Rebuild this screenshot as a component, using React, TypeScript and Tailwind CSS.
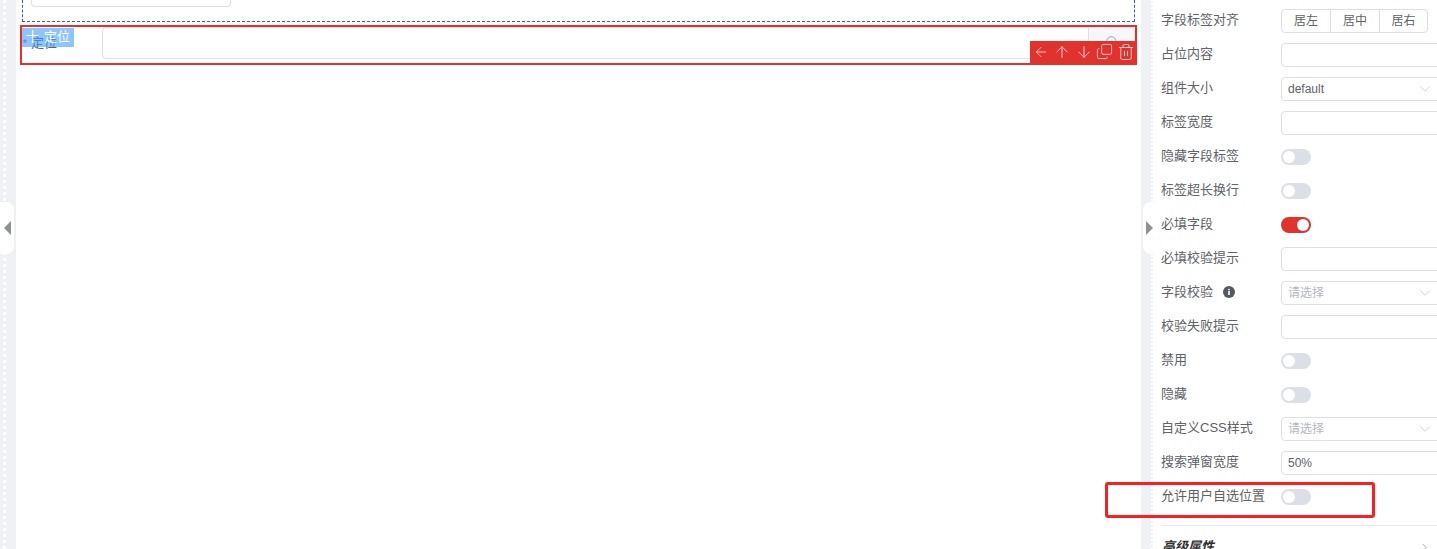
import React from 'react';
import { ArrowLeft, ArrowUp, ArrowDown, Copy, Trash2, ChevronDown, ChevronRight, Search } from 'lucide-react';

const Label = ({ text, children }: { text: string; children?: React.ReactNode }) => (
  <div className="w-[120px] pb-[2px] flex items-center gap-[10px] text-[13px] leading-[22px] text-[#606266]">
    {text}
    {children}
  </div>
);

const Switch = ({ on }: { on?: boolean }) => (
  <div className={`w-[30px] h-[16px] rounded-full p-[2px] flex ${on ? 'bg-[#e1322d] justify-end' : 'bg-[#dcdfe6] justify-start'}`}>
    <div className="w-[12px] h-[12px] rounded-full bg-white" />
  </div>
);

const Input = ({ value }: { value?: string }) => (
  <div className="flex-1 h-[24px] border border-[#dcdfe6] rounded-[4px] -mr-[4px] px-[6px] text-[12px] leading-[22px] text-[#606266]">
    {value}
  </div>
);

const Select = ({ value, placeholder }: { value: string; placeholder?: boolean }) => (
  <div className={`flex-1 h-[24px] border border-[#dcdfe6] rounded-[4px] -mr-[4px] pl-[6px] pr-[6px] flex items-center justify-between text-[12px] ${placeholder ? 'text-[#b4b8c0]' : 'text-[#606266]'}`}>
    {value}
    <ChevronDown className="w-[18px] h-[18px] text-[#c0c4cc]" strokeWidth={1} />
  </div>
);

const Row = ({ label, icon, children }: { label: string; icon?: boolean; children: React.ReactNode }) => (
  <div className="h-[24px] mb-[10px] flex items-center">
    <Label text={label}>
      {icon && (
        <svg viewBox="0 0 12 12" className="w-[12px] h-[12px]">
          <circle cx="6" cy="6" r="6" fill="#55585e" />
          <rect x="5.2" y="5" width="1.6" height="4" fill="#fff" />
          <rect x="5.2" y="2.8" width="1.6" height="1.4" fill="#fff" />
        </svg>
      )}
    </Label>
    {children}
  </div>
);

const Handle = ({ side }: { side: 'left' | 'right' }) => (
  <div
    className={
      side === 'left'
        ? 'absolute top-[202px] left-0 w-[14px] h-[52px] bg-white rounded-r-[8px] flex items-center justify-start pl-[4px]'
        : 'absolute top-[202px] left-[2px] w-[10px] h-[52px] bg-white rounded-l-[8px] flex items-center justify-end'
    }
  >
    {side === 'left' ? (
      <div className="w-0 h-0 border-y-[7px] border-y-transparent border-r-[7px] border-r-[#8d9095]" />
    ) : (
      <div className="w-0 h-0 border-y-[7px] border-y-transparent border-l-[7px] border-l-[#8d9095]" />
    )}
  </div>
);

export default function App() {
  return (
    <div className="w-[1437px] h-[549px] overflow-hidden flex bg-white font-['Liberation_Sans','Noto_Sans_CJK_SC',sans-serif]">
      {/* left collapsed strip */}
      <div className="relative w-[16px] h-full bg-[#f0f1f4] shrink-0">
        <div className="ml-[3px] h-full border-l-[3px] border-dotted border-white" />
        <Handle side="left" />
      </div>

      {/* form canvas */}
      <div className="w-[1125px] shrink-0 h-full">
        <div className="ml-[6px] mr-[6px] h-[22px] border border-dashed border-[#336699] border-t-0 pl-[8px]">
          <div className="w-[200px] h-[7px] border border-t-0 border-[#dcdfe6] rounded-b-[4px]" />
        </div>
        <div className="relative ml-[4px] mr-[4px] mt-[3px] h-[40px] border-2 border-[#e1322d] flex">
          <div className="w-[80px] shrink-0 pl-[9px] pt-[4px] text-[13px] leading-[24px] text-[#606266]">定位</div>
          <div className="flex-1 h-[32px] border border-[#dcdfe6] rounded-[4px] flex justify-end">
            <div className="w-[46px] h-full bg-[#f5f7fa] border-l border-[#dcdfe6] rounded-r-[4px] flex justify-center pt-[7px]">
              <Search className="w-[14px] h-[14px] text-[#909399]" strokeWidth={1.5} />
            </div>
          </div>
          <span className="absolute left-[1px] top-[10px] text-[10px] leading-[14px] text-[#e1322d]">*</span>
          <div className="absolute top-[1px] left-0 w-[52px] h-[19px] bg-[#409eff]/60 text-white text-[13px] leading-[17px] pl-[4px] flex gap-[7px]">
            <span>十</span>
            <span className="-ml-[2px]">定位</span>
          </div>
          <div className="absolute -right-[2px] -bottom-[2px] w-[107px] h-[24px] bg-[#e1322d] flex items-center justify-between pl-[3px] pr-[2px] pb-[3px] text-[#fbd5d3]">
            <ArrowLeft className="w-[16px] h-[16px]" strokeWidth={1.25} />
            <ArrowUp className="w-[18px] h-[18px]" strokeWidth={1.25} />
            <ArrowDown className="w-[18px] h-[18px]" strokeWidth={1.25} />
            <Copy className="w-[17px] h-[17px] -scale-y-100" strokeWidth={1.25} />
            <Trash2 className="w-[18px] h-[18px]" strokeWidth={1.25} />
          </div>
        </div>
      </div>

      {/* right gutter */}
      <div className="relative w-[12px] h-full bg-[#f0f1f4] shrink-0">
        <div className="ml-[10px] h-full border-l-[2px] border-dotted border-white" />
        <Handle side="right" />
      </div>

      {/* property panel */}
      <div className="flex-1 min-w-0 pl-[8px] pt-[9px]">
        <div className="h-[24px] mb-[10px] flex items-center">
          <Label text="字段标签对齐" />
          <div className="flex h-[24px] border border-[#dcdfe6] rounded-[4px] text-[12px] text-[#606266] leading-[22px] text-center">
            <div className="w-[48px]">居左</div>
            <div className="w-[49px] border-l border-[#dcdfe6]">居中</div>
            <div className="w-[48px] border-l border-[#dcdfe6]">居右</div>
          </div>
        </div>
        <Row label="占位内容"><Input /></Row>
        <Row label="组件大小"><Select value="default" /></Row>
        <Row label="标签宽度"><Input /></Row>
        <Row label="隐藏字段标签"><Switch /></Row>
        <Row label="标签超长换行"><Switch /></Row>
        <Row label="必填字段"><Switch on /></Row>
        <Row label="必填校验提示"><Input /></Row>
        <Row label="字段校验" icon><Select value="请选择" placeholder /></Row>
        <Row label="校验失败提示"><Input /></Row>
        <Row label="禁用"><Switch /></Row>
        <Row label="隐藏"><Switch /></Row>
        <Row label="自定义CSS样式"><Select value="请选择" placeholder /></Row>
        <Row label="搜索弹窗宽度"><Input value="50%" /></Row>
        <div className="relative h-[24px] flex items-center">
          <Label text="允许用户自选位置" />
          <Switch />
          {/* red annotation */}
          <div className="absolute -left-[56px] -top-[3px] w-[270px] h-[36px] border-[3px] border-[#fb1f1f] rounded-[3px]" />
        </div>
        <div className="mt-[16px] border-t border-[#e8e9ed] pt-[11px] pl-[1px] flex items-center justify-between -mr-[4px] pr-[10px]">
          <span className="text-[13px] leading-[20px] font-bold italic text-[#303133]">高级属性</span>
          <ChevronRight className="w-[13px] h-[13px] text-[#909399]" strokeWidth={1.5} />
        </div>
      </div>
    </div>
  );
}
